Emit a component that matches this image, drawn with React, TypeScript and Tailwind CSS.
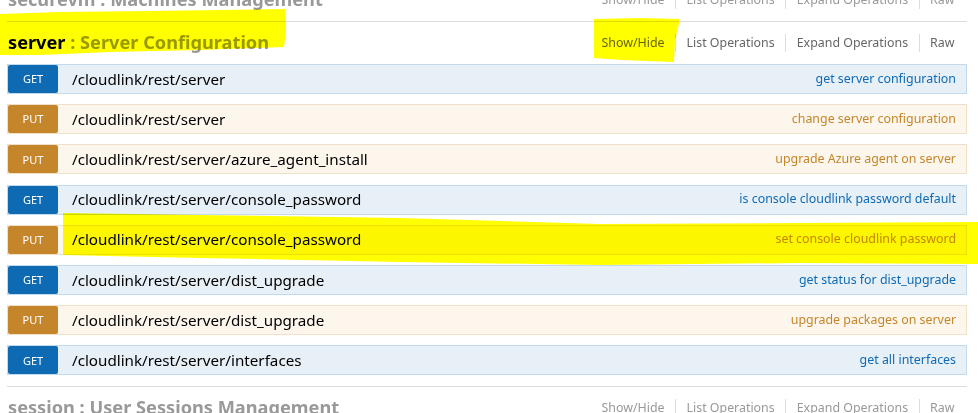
import React from 'react';

type Op = {
  method: 'GET' | 'PUT';
  path: string;
  summary: string;
};

const ops: Op[] = [
  { method: 'GET', path: '/cloudlink/rest/server', summary: 'get server configuration' },
  { method: 'PUT', path: '/cloudlink/rest/server', summary: 'change server configuration' },
  { method: 'PUT', path: '/cloudlink/rest/server/azure_agent_install', summary: 'upgrade Azure agent on server' },
  { method: 'GET', path: '/cloudlink/rest/server/console_password', summary: 'is console cloudlink password default' },
  { method: 'PUT', path: '/cloudlink/rest/server/console_password', summary: 'set console cloudlink password' },
  { method: 'GET', path: '/cloudlink/rest/server/dist_upgrade', summary: 'get status for dist_upgrade' },
  { method: 'PUT', path: '/cloudlink/rest/server/dist_upgrade', summary: 'upgrade packages on server' },
  { method: 'GET', path: '/cloudlink/rest/server/interfaces', summary: 'get all interfaces' },
];

const Options = ({ active }: { active?: boolean }) => {
  const color = active ? 'text-[#666666]' : 'text-[#999999]';
  const links = ['Show/Hide', 'List Operations', 'Expand Operations', 'Raw'];
  return (
    <ul className={`flex items-center text-[12.4px] ${color} mr-[2px]`}>
      {links.map((l, i) => (
        <li
          key={l}
          className={`px-[10.5px] leading-[18px] ${i > 0 ? 'border-l border-[#dddddd]' : ''}`}
        >
          {l}
        </li>
      ))}
    </ul>
  );
};

const Heading = ({ name, desc, active }: { name: string; desc: string; active?: boolean }) => (
  <div className="h-[42px] flex items-center justify-between">
    <h2 className="text-[18.2px] font-bold pl-px">
      <span className={active ? 'text-black' : 'text-[#999999]'}>{name}</span>
      <span className="text-[#999999]"> : {desc}</span>
    </h2>
    <Options active={active} />
  </div>
);

const Row = ({ op }: { op: Op }) => {
  const get = op.method === 'GET';
  return (
    <div
      className={`h-[30px] flex items-stretch border ${
        get ? 'bg-[#e7f0f7] border-[#c3d9ec]' : 'bg-[#fcf6ec] border-[#f0e0ca]'
      }`}
    >
      <span
        className={`w-[50px] shrink-0 flex items-center justify-center pt-px rounded-[2px] text-[11px] text-white ${
          get ? 'bg-[#0f6ab4]' : 'bg-[#c5862b]'
        }`}
      >
        {op.method}
      </span>
      <span className="pl-[14px] flex items-center text-[15.2px] text-black">{op.path}</span>
      <span
        className={`ml-auto pr-[10px] flex items-center text-[12.4px] ${
          get ? 'text-[#0f6ab4]' : 'text-[#c5862b]'
        }`}
      >
        {op.summary}
      </span>
    </div>
  );
};

// freehand marker strokes laid over the page
const Highlights = () => (
  <svg
    className="absolute inset-0 pointer-events-none mix-blend-multiply"
    width="978"
    height="413"
    viewBox="0 0 978 413"
  >
    <g fill="#ffff00">
      <polygon points="0,14 60,12 150,11 285,9 286,30 284,47 200,50 110,52 40,55 0,55" />
      <polygon points="594,19 640,18 680,19 675,40 674,62 622,60 594,58" />
      <polygon points="63,213 200,215 400,218 600,224 800,223 978,222 978,264 800,263 600,265 400,262 200,258 63,255" />
    </g>
  </svg>
);

export default function App() {
  return (
    <div
      className="relative w-[978px] h-[413px] overflow-hidden bg-white"
      style={{ fontFamily: '"Noto Sans", "Open Sans", sans-serif' }}
    >
      <div className="pl-[7px] pr-[11px] -mt-[21px]">
        <section className="border-b border-[#dddddd]">
          <Heading name="securevm" desc="Machines Management" />
        </section>
        <section className="border-b border-[#dddddd]">
          <Heading name="server" desc="Server Configuration" active />
          <div className="flex flex-col gap-[10.2px] pb-[10.6px]">
            {ops.map((op, i) => (
              <Row key={i} op={op} />
            ))}
          </div>
        </section>
        <section className="border-b border-[#dddddd]">
          <Heading name="session" desc="User Sessions Management" />
        </section>
      </div>
      <Highlights />
    </div>
  );
}
